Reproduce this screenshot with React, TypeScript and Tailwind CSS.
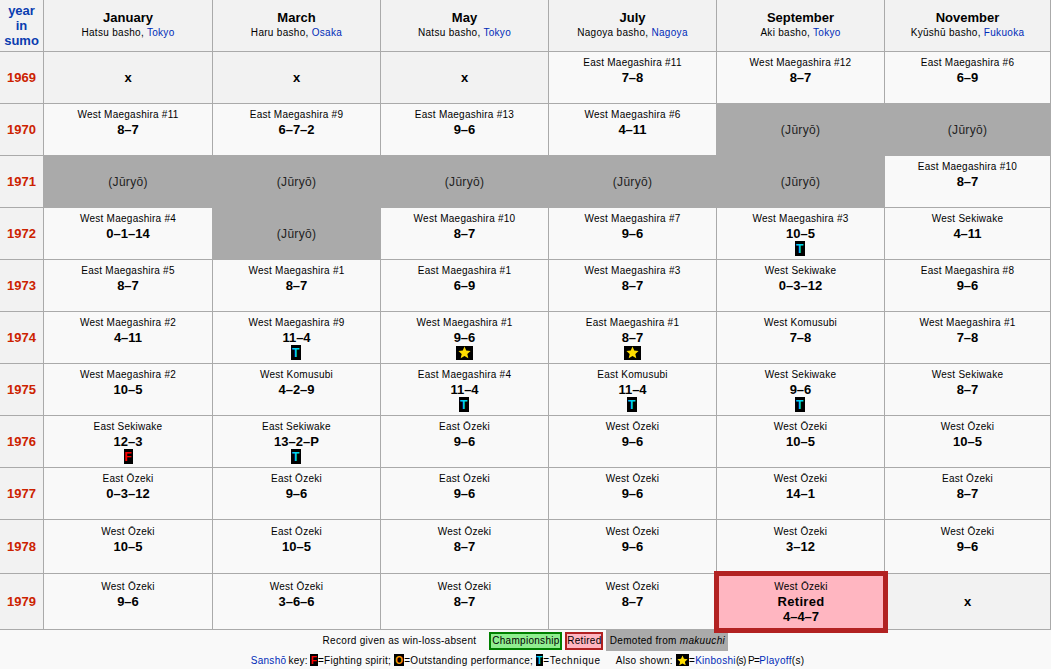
import React from "react";

type Prize = "T" | "F" | "S";

interface Basho {
  rank?: string;
  record?: string;
  prize?: Prize;
  juryo?: boolean;
  retired?: boolean;
}

const months = [
  { name: "January", basho: "Hatsu basho", city: "Tokyo" },
  { name: "March", basho: "Haru basho", city: "Osaka" },
  { name: "May", basho: "Natsu basho", city: "Tokyo" },
  { name: "July", basho: "Nagoya basho", city: "Nagoya" },
  { name: "September", basho: "Aki basho", city: "Tokyo" },
  { name: "November", basho: "Kyūshū basho", city: "Fukuoka" },
];

const J: Basho = { juryo: true };
const X: Basho = {};
const b = (rank: string, record: string, prize?: Prize): Basho => ({ rank, record, prize });

const years: { year: string; cells: Basho[] }[] = [
  {
    year: "1969",
    cells: [X, X, X, b("East Maegashira #11", "7–8"), b("West Maegashira #12", "8–7"), b("East Maegashira #6", "6–9")],
  },
  {
    year: "1970",
    cells: [b("West Maegashira #11", "8–7"), b("East Maegashira #9", "6–7–2"), b("East Maegashira #13", "9–6"), b("West Maegashira #6", "4–11"), J, J],
  },
  { year: "1971", cells: [J, J, J, J, J, b("East Maegashira #10", "8–7")] },
  {
    year: "1972",
    cells: [b("West Maegashira #4", "0–1–14"), J, b("West Maegashira #10", "8–7"), b("West Maegashira #7", "9–6"), b("West Maegashira #3", "10–5", "T"), b("West Sekiwake", "4–11")],
  },
  {
    year: "1973",
    cells: [b("East Maegashira #5", "8–7"), b("West Maegashira #1", "8–7"), b("East Maegashira #1", "6–9"), b("West Maegashira #3", "8–7"), b("West Sekiwake", "0–3–12"), b("East Maegashira #8", "9–6")],
  },
  {
    year: "1974",
    cells: [b("West Maegashira #2", "4–11"), b("West Maegashira #9", "11–4", "T"), b("West Maegashira #1", "9–6", "S"), b("East Maegashira #1", "8–7", "S"), b("West Komusubi", "7–8"), b("West Maegashira #1", "7–8")],
  },
  {
    year: "1975",
    cells: [b("West Maegashira #2", "10–5"), b("West Komusubi", "4–2–9"), b("East Maegashira #4", "11–4", "T"), b("East Komusubi", "11–4", "T"), b("West Sekiwake", "9–6", "T"), b("West Sekiwake", "8–7")],
  },
  {
    year: "1976",
    cells: [b("East Sekiwake", "12–3", "F"), b("East Sekiwake", "13–2–P", "T"), b("East Ōzeki", "9–6"), b("West Ōzeki", "9–6"), b("West Ōzeki", "10–5"), b("West Ōzeki", "10–5")],
  },
  {
    year: "1977",
    cells: [b("East Ōzeki", "0–3–12"), b("East Ōzeki", "9–6"), b("East Ōzeki", "9–6"), b("West Ōzeki", "9–6"), b("West Ōzeki", "14–1"), b("East Ōzeki", "8–7")],
  },
  {
    year: "1978",
    cells: [b("West Ōzeki", "10–5"), b("East Ōzeki", "10–5"), b("West Ōzeki", "8–7"), b("West Ōzeki", "9–6"), b("West Ōzeki", "3–12"), b("West Ōzeki", "9–6")],
  },
  {
    year: "1979",
    cells: [b("West Ōzeki", "9–6"), b("West Ōzeki", "3–6–6"), b("West Ōzeki", "8–7"), b("West Ōzeki", "8–7"), { rank: "West Ōzeki", record: "4–4–7", retired: true }, X],
  },
];

const Star = ({ size = 13 }: { size?: number }) => (
  <svg width={size} height={size} viewBox="0 0 24 24">
    <path d="M12 1l3.2 7.4 8 .8-6 5.4 1.8 7.9-7-4.2-7 4.2 1.8-7.9-6-5.4 8-.8z" fill="#ffdd00" />
  </svg>
);

const Badge = ({ prize }: { prize: Prize }) => {
  if (prize === "S") {
    return (
      <span className="flex h-[14px] w-[17px] items-center justify-center bg-black">
        <Star />
      </span>
    );
  }
  return (
    <span
      className={
        prize === "T"
          ? "mr-px flex h-[15px] w-[10px] items-center justify-center bg-black text-[12px] font-bold text-cyan-400"
          : "flex h-[15px] w-[9px] items-center justify-center bg-black text-[12px] font-bold text-[#ff0000]"
      }
    >
      {prize}
    </span>
  );
};

const Cell = ({ cell }: { cell: Basho }) => {
  if (cell.juryo) {
    return (
      <div className="flex items-center justify-center border-b border-r border-[#aaaaaa] bg-[#aaaaaa] text-[12px] tracking-[0.3px] text-[#222]">
        (Jūryō)
      </div>
    );
  }
  if (!cell.rank) {
    return (
      <div className="flex items-center justify-center border-b border-r border-[#aaaaaa] bg-[#f2f2f2] text-[13px] font-bold text-black">
        x
      </div>
    );
  }
  if (cell.retired) {
    return (
      <div className="relative z-10 flex flex-col items-center justify-center bg-[#ffb6c1] pb-0.5 outline-[5px] outline-offset-[-2px] outline-[#b22222]">
        <div className="h-[15px] text-[10px] leading-[15px] tracking-[0.25px]">{cell.rank}</div>
        <div className="h-[15px] text-[13px] font-bold leading-[15px] tracking-[0.3px]">Retired</div>
        <div className="h-[15px] text-[13px] font-bold leading-[15px]">{cell.record}</div>
      </div>
    );
  }
  return (
    <div className="flex flex-col items-center justify-center border-b border-r border-[#aaaaaa] bg-[#f9f9f9] text-black">
      <div className="h-[15px] text-[10px] leading-[15px] tracking-[0.25px]">{cell.rank}</div>
      <div className="h-[15px] text-[13px] font-bold leading-[15px]">{cell.record}</div>
      <div className="flex h-[15px] items-center">{cell.prize && <Badge prize={cell.prize} />}</div>
    </div>
  );
};

const A = ({ children }: { children: React.ReactNode }) => (
  <span className="text-[#002bb8]">{children}</span>
);

export default function App() {
  return (
    <div className="h-[669px] w-[1051px] overflow-hidden bg-[#f9f9f9] font-['Liberation_Sans',sans-serif] text-black">
      <div className="grid grid-cols-[44px_169px_168px_168px_168px_168px_166px] grid-rows-[repeat(10,52px)_54px_56px]">
        {/* Header */}
        <div className="flex flex-col items-center justify-center border-b border-r border-[#aaaaaa] bg-[#f2f2f2] text-[13px] font-bold leading-[15px] text-[#0a3db0]">
          <span>year</span>
          <span>in</span>
          <span>sumo</span>
        </div>
        {months.map((m) => (
          <div
            key={m.name}
            className="flex flex-col items-center justify-center border-b border-r border-[#aaaaaa] bg-[#f2f2f2] pb-0.5 last:border-r-0"
          >
            <div className="text-[13px] font-bold leading-[17px]">{m.name}</div>
            <div className="text-[10px] leading-[14px] tracking-[0.3px]">
              {m.basho}, <A>{m.city}</A>
            </div>
          </div>
        ))}

        {/* Years */}
        {years.map((row) => (
          <React.Fragment key={row.year}>
            <div className="flex items-center justify-center border-b border-r border-[#aaaaaa] bg-[#f2f2f2] text-[13px] font-bold text-[#cc2200]">
              {row.year}
            </div>
            {row.cells.map((cell, i) => (
              <Cell key={i} cell={cell} />
            ))}
          </React.Fragment>
        ))}
      </div>

      {/* Legend */}
      <div className="flex h-[21px] items-center justify-center gap-[3px] text-[10px] tracking-[0.3px]">
        <span className="mr-[10px]">Record given as win-loss-absent</span>
        <span className="flex h-[18px] w-[73px] items-center justify-center border-2 border-[#008000] bg-[#90ee90]">Championship</span>
        <span className="flex h-[18px] w-[38px] items-center justify-center border-2 border-[#b22222] bg-[#ffb6c1]">Retired</span>
        <span className="flex h-[21px] w-[122px] items-center justify-center bg-[#aaaaaa]">
          Demoted from&nbsp;<i>makuuchi</i>
        </span>
      </div>
      <div className="flex h-[18px] items-center justify-center pl-[4px] text-[10px] tracking-[0.3px]">
        <A>Sanshō</A>
        <span className="mx-[2px]">key:</span>
        <span className="flex h-[12px] w-[8px] items-center justify-center bg-black font-bold text-[#ff0000]">F</span>
        =Fighting spirit;&nbsp;
        <span className="flex h-[12px] w-[10px] items-center justify-center bg-black font-bold text-[#ff9900]">O</span>
        =Outstanding performance;&nbsp;
        <span className="flex h-[12px] w-[7px] items-center justify-center bg-black font-bold text-cyan-400">T</span>
        <span className="tracking-[0.6px]">=Technique</span>
        <span className="ml-[15px]">Also shown:&nbsp;</span>
        <span className="flex h-[12px] w-[13px] items-center justify-center bg-black">
          <Star size={11} />
        </span>
        =<A>Kinboshi</A>
        <span className="tracking-[-0.6px]">(s) P=</span>
        <A>Playoff</A>(s)
      </div>
    </div>
  );
}
